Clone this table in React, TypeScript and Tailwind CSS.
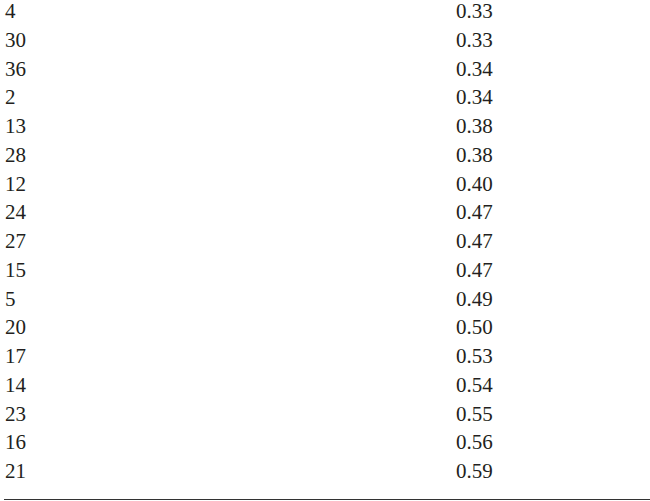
const rows: [string, string][] = [
  ["4", "0.33"],
  ["30", "0.33"],
  ["36", "0.34"],
  ["2", "0.34"],
  ["13", "0.38"],
  ["28", "0.38"],
  ["12", "0.40"],
  ["24", "0.47"],
  ["27", "0.47"],
  ["15", "0.47"],
  ["5", "0.49"],
  ["20", "0.50"],
  ["17", "0.53"],
  ["14", "0.54"],
  ["23", "0.55"],
  ["16", "0.56"],
  ["21", "0.59"],
];

export default function App() {
  return (
    <div className="w-[650px] h-[501px] bg-white overflow-hidden font-['Liberation_Serif',serif] text-[21px] text-[#231f20]">
      <div className="-mt-[3px]">
        {rows.map(([id, value], i) => (
          <div key={i} className="flex h-[28.75px] leading-[28.75px]">
            <div className="w-[456px] pl-[5px]">{id}</div>
            <div>{value}</div>
          </div>
          ))}
      </div>
      <div className="ml-[4px] mt-[13px] h-px bg-[#333]" />
    </div>
  );
}
